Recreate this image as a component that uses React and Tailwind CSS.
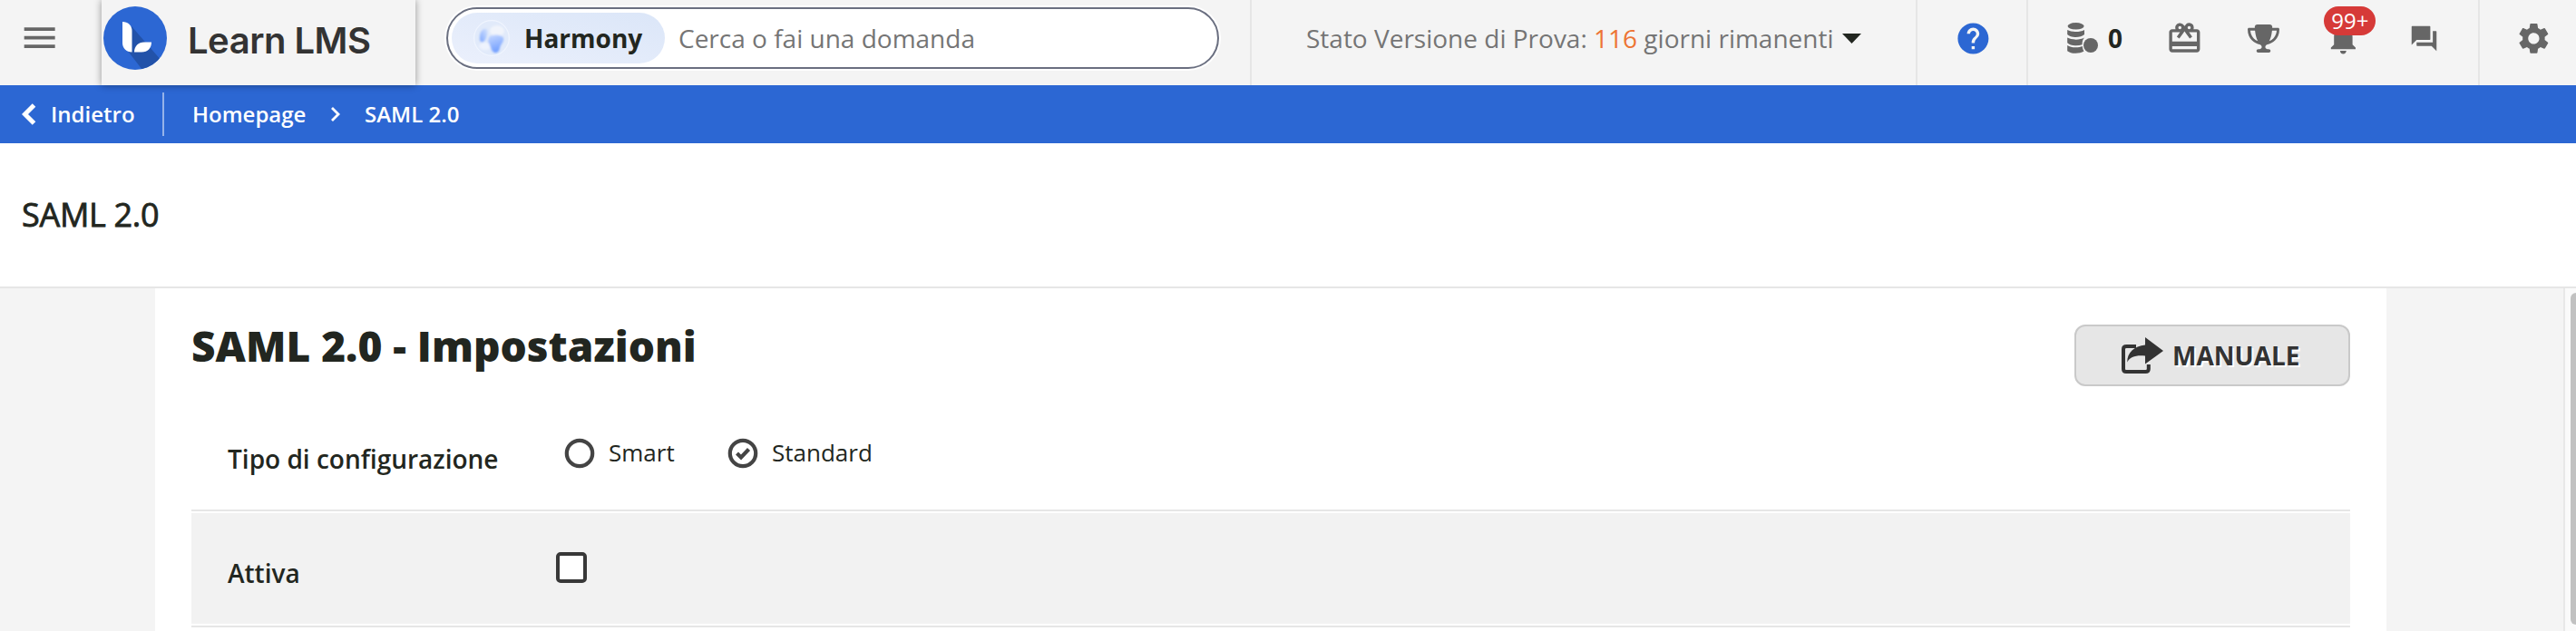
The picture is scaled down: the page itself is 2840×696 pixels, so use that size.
import { MdMenu, MdHelp, MdCardGiftcard, MdNotifications, MdSettings } from 'react-icons/md';
import { FaTrophy } from 'react-icons/fa6';

const Logo = () => (
    <svg width="70" height="70" viewBox="0 0 70 70" className="shrink-0">
        <defs>
            <clipPath id="logo-disc"><circle cx="35" cy="35" r="35" /></clipPath>
        </defs>
        <circle cx="35" cy="35" r="35" fill="#2c67d3" />
        <path d="M31 22L92 92L66 100L26 48Z" fill="#2252a9" clipPath="url(#logo-disc)" />
        <path d="M21 17C27 17 31.5 21 31.5 27V50.5C25 50.5 21 46 21 40Z" fill="#fff" />
        <path d="M34 50.5C34 44 38.5 39.5 45 39.5H53C53 46 49 50.5 42 50.5Z" fill="#fff" />
    </svg>
);

const HarmonyOrb = () => (
    <svg width="40" height="40" viewBox="0 0 40 40" className="shrink-0">
        <defs>
            <filter id="orb-soft" x="-30%" y="-30%" width="160%" height="160%">
                <feGaussianBlur stdDeviation="1.1" />
            </filter>
            <linearGradient id="orb-a" x1="0" y1="1" x2="1" y2="0">
                <stop offset="0" stopColor="#7fa8ff" />
                <stop offset="1" stopColor="#d5e3fd" />
            </linearGradient>
            <linearGradient id="orb-b" x1="0.2" y1="0" x2="0.5" y2="1">
                <stop offset="0" stopColor="#c3d6ff" />
                <stop offset="1" stopColor="#6f9dff" />
            </linearGradient>
        </defs>
        <circle cx="20" cy="20" r="19.3" fill="#e1eafa" stroke="#f0f5fe" strokeWidth="1.2" />
        <g filter="url(#orb-soft)">
            <ellipse cx="26" cy="12" rx="8" ry="6" fill="#f1f4fb" />
            <ellipse cx="13" cy="29" rx="7" ry="4" fill="#eef3fd" />
            <path d="M7 22C6 14 10 9 14 10C17 11 15 17 14 20C12 25 8 26 7 22Z" fill="url(#orb-a)" />
            <path d="M17 19C20 15 32 16 33 20C34 24 30 26 29 31C28 37 23 38 20 33C18 29 18 26 16 24Z" fill="url(#orb-b)" />
        </g>
    </svg>
);

const CoinsIcon = () => (
    <svg width="34" height="34" viewBox="0 0 34 34" fill="#666" className="shrink-0">
        <ellipse cx="9.6" cy="3.8" rx="9" ry="3.7" />
        <path d="M0.2 8C5 10.7 14.2 10.7 19 8V13C15 17 4.2 17 0.2 13Z" />
        <path d="M0.2 16.6C5 19.3 14.2 19.3 19 16.6C17.3 18.5 16.5 21 16.6 24.3C11 26.1 3.5 25.5 0.2 22.3Z" />
        <path d="M0.2 25C4.5 27.7 12 28.1 16.8 26C17 28.2 17.5 29.9 18.5 31.6C13 34.8 4.2 34.4 0.2 31.2Z" />
        <circle cx="26" cy="25" r="8" />
    </svg>
);

const ForumIcon = () => (
    <svg width="33" height="33" viewBox="0 0 24 24" fill="#666">
        <path d="M21.5 6H19v9H6v2.5q0 .5.5.5H18l4 4V6.5q0-.5-.5-.5zM17 12.5v-10q0-.5-.5-.5h-14q-.5 0-.5.5V17l4-4h10.500q.5 0 .5-.5z" />
    </svg>
);

const ShareIcon = () => (
    <svg width="46" height="40" viewBox="0 0 46 40" className="shrink-0">
        <path d="M16 10H5.500Q2 10 2 13V35Q2 38 5 38H26.500Q29.800 38 29.800 35V30" fill="none" stroke="#333" strokeWidth="4" />
        <path d="M26 0L46 15L26 29.500V20.500C16 19.500 9 21.500 6.300 27.500C6 17 14 9.500 26 8.500Z" fill="#333" />
    </svg>
);

const Radio = ({ label, checked = false }) => (
    <label className="flex h-8 items-center gap-[15px]">
        <svg width="34" height="34" viewBox="0 0 34 34" fill="none" stroke="#444">
            <circle cx="17" cy="17" r="14.2" fill="#fff" strokeWidth="4.2" />
            {checked && <path d="M10.5 17L15 21.5L23.5 12.5" strokeWidth="4.2" />}
        </svg>
        <span className="pb-0.5 text-[26px]">{label}</span>
    </label>
);

const Header = () => (
    <header className="flex h-[94px] bg-[#f4f4f4]">
        <div className="flex w-28 shrink-0 items-center pb-[10px] pl-[21px]">
            <MdMenu size={45.3} color="#666" />
        </div>
        <div className="relative z-10 flex w-[346px] shrink-0 items-center bg-[#f4f4f4] pb-[10px] pl-[2px] shadow-[0_0_8px_rgba(0,0,0,0.4)]">
            <Logo />
            <span className="ml-[23px] pt-[5px] font-['Inter'] text-[40px] font-semibold tracking-[-0.5px] text-[#333]">Learn LMS</span>
        </div>
        <div className="flex w-[922px] shrink-0 items-center border-r-2 border-[#e6e6e6] pb-[10px] pl-[34px]">
            <div className="flex h-[68px] w-[852px] items-center rounded-full border-2 border-[#6a6f80] bg-white pl-1 shadow-[0_0_0_2px_#fff]">
                <div className="flex h-14 w-[235px] items-center rounded-full bg-linear-to-tr from-[#ebf0fc] to-[#dbe6f8] pl-6">
                    <HarmonyOrb />
                    <span className="ml-4 text-[28px] font-bold">Harmony</span>
                </div>
                <span className="ml-[15px] text-[28px] text-[#757575]">Cerca o fai una domanda</span>
            </div>
        </div>
        <div className="flex w-[734px] shrink-0 items-center border-r-2 border-[#e6e6e6] pb-[10px] pl-[60px] text-[28px] text-[#757575]">
            <span className="w-[591px] whitespace-nowrap">
                Stato Versione di Prova: <span className="text-[#ed7434]">116</span> giorni rimanenti
            </span>
            <svg width="21" height="11" viewBox="0 0 21 11"><path d="M0 0H21L10.5 11Z" fill="#222620" /></svg>
        </div>
        <div className="flex w-[122px] shrink-0 items-center border-r-2 border-[#e6e6e6] pb-[10px] pl-[40.6px]">
            <MdHelp size={40.8} color="#2c67d3" />
        </div>
        <div className="flex w-[498px] shrink-0 items-center border-r-2 border-[#e6e6e6] pb-[10px] pl-[43px]">
            <CoinsIcon />
            <span className="ml-[11px] w-[65px] shrink-0 text-[28px] font-bold">0</span>
            <MdCardGiftcard size={40.8} color="#666" className="ml-[-1.4px] shrink-0" />
            <FaTrophy size={35} color="#666" className="ml-[50px] shrink-0" />
            <div className="relative ml-[50px] shrink-0">
                <MdNotifications size={40.8} color="#666" />
                <span className="absolute top-[-15px] left-[-1px] flex h-8 w-[57px] items-center justify-center rounded-full bg-[#d63a38] text-2xl text-white">99+</span>
            </div>
            <span className="ml-[52px] shrink-0"><ForumIcon /></span>
        </div>
        <div className="flex shrink-0 items-center pb-[10px] pl-[39px]">
            <MdSettings size={40.8} color="#666" />
        </div>
    </header>
);

const Breadcrumb = () => (
    <nav className="flex h-16 items-center bg-[#2c67d3] text-2xl font-semibold text-white">
        <svg width="16" height="24" viewBox="0 0 16 24" fill="none" stroke="#fff" strokeWidth="5" className="ml-6">
            <path d="M13.5 2L3.5 12L13.5 22" />
        </svg>
        <span className="ml-4 w-[123px]">Indietro</span>
        <div className="h-12 w-0.5 bg-white/50" />
        <span className="ml-[31px] w-[153px]">Homepage</span>
        <svg width="10" height="16" viewBox="0 0 10 16" fill="none" stroke="#fff" strokeWidth="2.8">
            <path d="M1 1L8 8L1 15" />
        </svg>
        <span className="ml-[27px]">SAML 2.0</span>
    </nav>
);

export default function App() {
    return (
        <div className="h-[696px] w-[2840px] overflow-hidden bg-white font-['Open_Sans',sans-serif] text-[#222620]">
            <Header />
            <Breadcrumb />
            <div className="flex h-40 items-center border-b-2 border-[#e6e6e6] pl-6">
                <h1 className="text-[36px] tracking-[-0.3px] [-webkit-text-stroke:0.8px_#222620]">SAML 2.0</h1>
            </div>

            <div className="flex h-[378px] bg-[#f4f4f4]">
                <main className="ml-[171px] w-[2460px] bg-white px-10 pt-10">
                    <div className="flex h-[68px] justify-between">
                        <h2 className="text-[46px] leading-[46px] font-extrabold">SAML 2.0 - Impostazioni</h2>
                        <button type="button" className="flex h-[68px] w-[304px] items-center rounded-xl border-2 border-[#c9c9c9] bg-[#e6e6e6] pl-[50px]">
                            <ShareIcon />
                            <span className="ml-[10px] text-[28px] font-bold text-[#333] [text-shadow:2px_2px_0_#fff]">MANUALE</span>
                        </button>
                    </div>

                    <div className="flex h-[138px] items-start border-b-2 border-[#e6e6e6] pl-10">
                        <span className="mt-16 w-[371px] text-[28px] leading-8 font-semibold">Tipo di configurazione</span>
                        <div className="mt-[58px] flex">
                            <div className="w-[180px]"><Radio label="Smart" /></div>
                            <Radio label="Standard" checked />
                        </div>
                    </div>

                    <div className="mt-0.5 flex h-[122px] items-start bg-[#f2f2f2] pl-10">
                        <span className="mt-[50px] w-[362px] text-[28px] leading-8 font-semibold">Attiva</span>
                        <div className="mt-[43px] size-[34px] rounded-[5px] border-4 border-[#383838] bg-white" />
                    </div>
                    <div className="mt-0.5 h-0.5 bg-[#e6e6e6]" />
                </main>

                {/* Scrollbar gutter */}
                <div className="ml-auto w-[14px] border-l-2 border-[#e8e8e8] bg-[#fafafa] pt-[5px] pl-1.5">
                    <div className="h-[366px] w-1.5 rounded-l-full bg-[#c1c1c1]" />
                </div>
            </div>
        </div>
    );
}
